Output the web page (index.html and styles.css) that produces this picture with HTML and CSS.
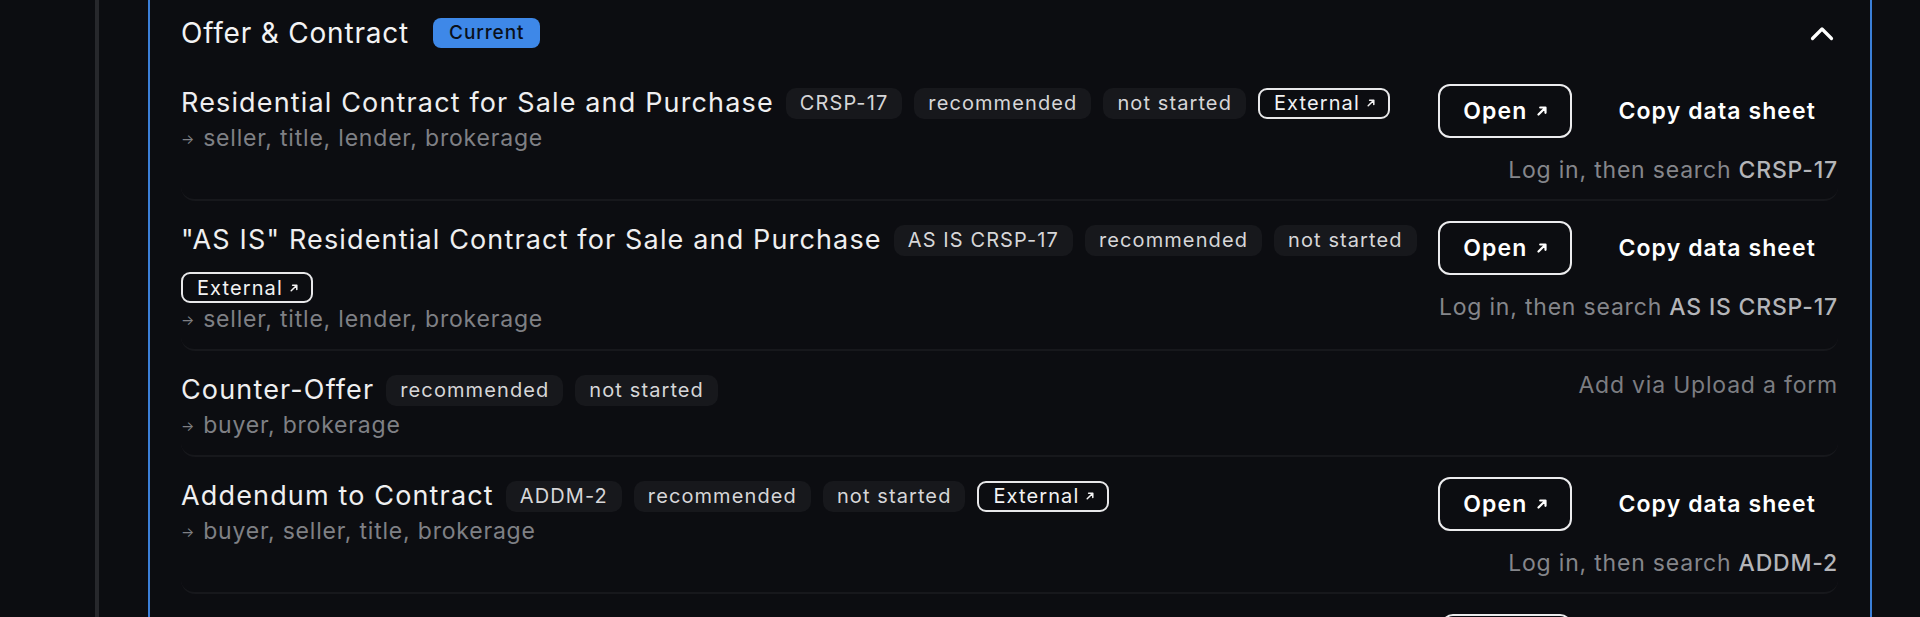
FILE: index.html
```html
<!DOCTYPE html>
<html lang="en">
<head>
<meta charset="utf-8">
<title>Offer &amp; Contract</title>
<link rel="stylesheet" href="styles.css">
</head>
<body>
<div class="layout">
  <div class="rail"></div>
  <section class="stage">
    <header class="stage-head">
      <div class="stage-title">
        <h2>Offer &amp; Contract</h2>
        <span class="badge">Current</span>
      </div>
      <button class="collapse" aria-label="Collapse">
        <svg width="24" height="16" viewBox="0 0 24 16"><polyline points="2.5,13.5 12,4 21.5,13.5" fill="none" stroke="#ffffff" stroke-width="3.2" stroke-linecap="round" stroke-linejoin="round"/></svg>
      </button>
    </header>

    <div class="forms">
      <div class="form-row">
        <div class="form-main">
          <div class="form-line">
            <span class="form-name">Residential Contract for Sale and Purchase</span>
            <span class="chip">CRSP-17</span>
            <span class="chip">recommended</span>
            <span class="chip">not started</span>
            <span class="chip chip-ext">External <svg class="ext-s" width="8" height="8" viewBox="0 0 8 8"><path d="M1.2 6.8 L6.8 1.2 M2.6 1.2 H6.8 V5.4" fill="none" stroke="currentColor" stroke-width="1.5" stroke-linecap="round" stroke-linejoin="round"/></svg></span>
          </div>
          <div class="form-to"><span class="to-arrow">→</span>seller, title, lender, brokerage</div>
        </div>
        <div class="form-side">
          <div class="actions">
            <button class="btn btn-open">Open <svg width="10" height="10" viewBox="0 0 10 10"><path d="M1.5 8.5 L8.3 1.7 M3.2 1.5 H8.5 V6.8" fill="none" stroke="currentColor" stroke-width="2.2" stroke-linecap="round" stroke-linejoin="round"/></svg></button>
            <button class="btn btn-copy">Copy data sheet</button>
          </div>
          <div class="hint">Log in, then search <b>CRSP-17</b></div>
        </div>
      </div>

      <div class="form-row">
        <div class="form-main">
          <div class="form-line">
            <span class="form-name">&quot;AS IS&quot; Residential Contract for Sale and Purchase</span>
            <span class="chip">AS IS CRSP-17</span>
            <span class="chip">recommended</span>
            <span class="chip">not started</span>
            <span class="chip chip-ext">External <svg class="ext-s" width="8" height="8" viewBox="0 0 8 8"><path d="M1.2 6.8 L6.8 1.2 M2.6 1.2 H6.8 V5.4" fill="none" stroke="currentColor" stroke-width="1.5" stroke-linecap="round" stroke-linejoin="round"/></svg></span>
          </div>
          <div class="form-to"><span class="to-arrow">→</span>seller, title, lender, brokerage</div>
        </div>
        <div class="form-side">
          <div class="actions">
            <button class="btn btn-open">Open <svg width="10" height="10" viewBox="0 0 10 10"><path d="M1.5 8.5 L8.3 1.7 M3.2 1.5 H8.5 V6.8" fill="none" stroke="currentColor" stroke-width="2.2" stroke-linecap="round" stroke-linejoin="round"/></svg></button>
            <button class="btn btn-copy">Copy data sheet</button>
          </div>
          <div class="hint">Log in, then search <b>AS IS CRSP-17</b></div>
        </div>
      </div>

      <div class="form-row">
        <div class="form-main">
          <div class="form-line">
            <span class="form-name">Counter-Offer</span>
            <span class="chip">recommended</span>
            <span class="chip">not started</span>
          </div>
          <div class="form-to"><span class="to-arrow">→</span>buyer, brokerage</div>
        </div>
        <div class="form-side">
          <div class="hint hint-muted">Add via Upload a form</div>
        </div>
      </div>

      <div class="form-row">
        <div class="form-main">
          <div class="form-line">
            <span class="form-name">Addendum to Contract</span>
            <span class="chip">ADDM-2</span>
            <span class="chip">recommended</span>
            <span class="chip">not started</span>
            <span class="chip chip-ext">External <svg class="ext-s" width="8" height="8" viewBox="0 0 8 8"><path d="M1.2 6.8 L6.8 1.2 M2.6 1.2 H6.8 V5.4" fill="none" stroke="currentColor" stroke-width="1.5" stroke-linecap="round" stroke-linejoin="round"/></svg></span>
          </div>
          <div class="form-to"><span class="to-arrow">→</span>buyer, seller, title, brokerage</div>
        </div>
        <div class="form-side">
          <div class="actions">
            <button class="btn btn-open">Open <svg width="10" height="10" viewBox="0 0 10 10"><path d="M1.5 8.5 L8.3 1.7 M3.2 1.5 H8.5 V6.8" fill="none" stroke="currentColor" stroke-width="2.2" stroke-linecap="round" stroke-linejoin="round"/></svg></button>
            <button class="btn btn-copy">Copy data sheet</button>
          </div>
          <div class="hint">Log in, then search <b>ADDM-2</b></div>
        </div>
      </div>

      <div class="form-row">
        <div class="form-main"></div>
        <div class="form-side">
          <div class="actions">
            <span class="btn btn-open btn-stub" aria-hidden="true"></span>
            <span class="btn btn-copy btn-stub" aria-hidden="true"></span>
          </div>
        </div>
      </div>
    </div>
  </section>
</div>
</body>
</html>
```

FILE: styles.css
```css
* { box-sizing: border-box; }

html, body {
  margin: 0;
  padding: 0;
  background: #0c0d11;
}

body {
  font-family: Inter, "Noto Sans", "DejaVu Sans", sans-serif;
  color: #eeeeef;
}

.layout {
  display: flex;
  height: 617px;
  overflow: hidden;
}

.rail {
  flex: 0 0 99px;
  border-right: 4px solid #27282c;
}

.stage {
  flex: 0 0 1724px;
  margin-left: 49px;
  border-left: 2px solid #3b7fd8;
  border-right: 2px solid #3b7fd8;
  padding: 0 32px 0 31px;
}

.stage-head {
  display: flex;
  align-items: center;
  justify-content: space-between;
  padding: 15px 0 13px;
}

.stage-title {
  display: flex;
  align-items: center;
  gap: 24px;
}

.stage-title h2 {
  margin: 0;
  font-size: 28px;
  line-height: 36px;
  font-weight: 400;
  letter-spacing: 0.8px;
  color: #f3f3f4;
}

.badge {
  height: 30px;
  line-height: 30px;
  padding: 0 16px;
  border-radius: 8px;
  background: #3e88e8;
  color: #0a101a;
  font-size: 19px;
  font-weight: 500;
  letter-spacing: 0.9px;
}

.collapse {
  width: 32px;
  height: 32px;
  padding: 0;
  border: 0;
  background: transparent;
  display: flex;
  align-items: center;
  justify-content: center;
}

.form-row {
  display: flex;
  justify-content: space-between;
  gap: 12px;
  padding: 20px 0 15px;
  border-bottom: 2px solid #17181c;
  border-radius: 14px;
}

.form-main {
  flex: 1 1 auto;
  min-width: 0;
}

.form-line {
  display: flex;
  flex-wrap: wrap;
  align-items: center;
  column-gap: 12px;
  row-gap: 13px;
}

.form-name {
  font-size: 27px;
  line-height: 38px;
  letter-spacing: 1.15px;
  color: #efeff0;
}

.chip {
  height: 31px;
  display: inline-flex;
  align-items: center;
  padding: 0 14px;
  border-radius: 10px;
  background: #17181c;
  color: #d6d6d8;
  font-size: 20px;
  letter-spacing: 1.1px;
}

.chip-ext {
  background: transparent;
  border: 2px solid #e8e8ea;
  border-radius: 9px;
  padding: 0 13px 0 14px;
  gap: 7px;
  color: #f2f2f3;
}

.form-to {
  margin-top: 2px;
  font-size: 23px;
  line-height: 28px;
  letter-spacing: 0.8px;
  color: #7f8085;
}

.to-arrow {
  font-size: 14px;
  margin-right: 8px;
  vertical-align: 2px;
}

.form-side {
  flex: 0 0 auto;
  display: flex;
  flex-direction: column;
  align-items: flex-end;
  gap: 18px;
}

.actions {
  display: flex;
  align-items: center;
  gap: 24px;
}

.btn {
  height: 54px;
  display: inline-flex;
  align-items: center;
  gap: 10px;
  background: transparent;
  color: #ffffff;
  font-family: Inter, "Noto Sans", sans-serif;
  font-size: 23px;
  font-weight: 600;
  letter-spacing: 1.1px;
}

.btn-open {
  padding: 0 23px;
  border: 2px solid #ececee;
  border-radius: 12px;
}

.btn-copy {
  padding: 0 22px;
  border: 0;
}

.btn-stub.btn-open {
  width: 131px;
}

.btn-stub.btn-copy {
  width: 242px;
}

.hint {
  font-size: 23px;
  line-height: 28px;
  letter-spacing: 0.8px;
  color: #85868b;
}

.hint b {
  font-weight: 500;
  color: #b4b5b9;
}

.hint-muted {
  color: #7c7d82;
}
```
